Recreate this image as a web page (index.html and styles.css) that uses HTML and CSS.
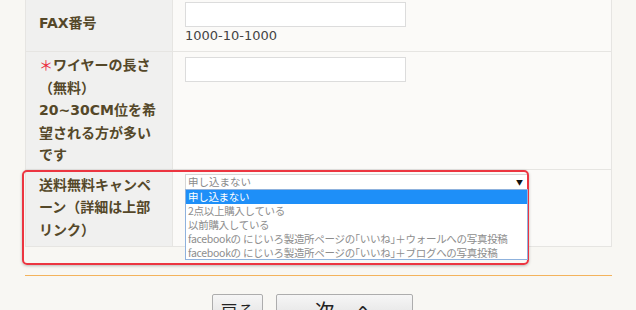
FILE: index.html
```html
<!DOCTYPE html>
<html lang="ja">
<head>
<meta charset="utf-8">
<link rel="stylesheet" href="styles.css">
</head>
<body>
<div class="page">
  <table class="form">
    <tr class="row-fax">
      <th>FAX番号</th>
      <td>
        <input class="text-input" type="text">
        <div class="example">1000-10-1000</div>
      </td>
    </tr>
    <tr class="row-wire">
      <th><span class="req">＊</span>ワイヤーの長さ（無料）<br>20~30CM位を希望される方が多いです</th>
      <td><input class="text-input" type="text"></td>
    </tr>
    <tr class="row-camp">
      <th>送料無料キャンペーン（詳細は上部リンク）</th>
      <td>
        <div class="select-wrap">
          <div class="select-box"><span>申し込まない</span><span class="arrow">▼</span></div>
          <ul class="options">
            <li class="selected">申し込まない</li>
            <li>2点以上購入している</li>
            <li>以前購入している</li>
            <li>facebookの にじいろ製造所ページの｢いいね｣＋ウォールへの写真投稿</li>
            <li>facebookの にじいろ製造所ページの｢いいね｣＋ブログへの写真投稿</li>
          </ul>
        </div>
      </td>
    </tr>
  </table>
  <div class="highlight"></div>
  <div class="rule"></div>
  <div class="buttons">
    <button class="btn back">戻る</button>
    <button class="btn next">次　へ</button>
  </div>
</div>
</body>
</html>
```
FILE: styles.css
```css
html, body {
  margin: 0;
  padding: 0;
}
body {
  background: #f8f7f3;
  font-family: "Noto Sans CJK JP", "Noto Sans", sans-serif;
  overflow: hidden;
  height: 310px;
}
.page {
  position: relative;
  width: 587px;
  margin: -5px 0 0 25px;
}
.form {
  border-collapse: collapse;
  width: 587px;
}
.form th, .form td {
  border: 1px solid #e6e5e2;
}
.form th {
  width: 120px;
  padding: 2px 13px;
  background: #f0f0ef;
  color: #554829;
  font-family: "DejaVu Sans", "Noto Sans CJK JP", sans-serif;
  font-size: 14px;
  font-weight: bold;
  line-height: 22.5px;
  text-align: left;
  vertical-align: middle;
}
.row-camp th {
  padding: 4px 13px 5px;
}
.req {
  color: #ea2b3c;
  font-weight: normal;
}
.form td {
  background: #fbfaf8;
  padding: 5px 12px 5px;
  vertical-align: top;
}
.row-fax td {
  padding-top: 6px;
}
.row-camp td {
  padding-top: 4px;
}
.text-input {
  display: block;
  box-sizing: border-box;
  width: 221px;
  height: 25px;
  margin: 0;
  border: 1px solid #dcdcdc;
  background: #fff;
}
.example {
  font-family: "DejaVu Sans", sans-serif;
  font-size: 13px;
  color: #444;
  line-height: 20px;
  margin-top: -1px;
}
.select-wrap {
  position: relative;
  width: 343px;
}
.select-box {
  box-sizing: border-box;
  height: 15px;
  border: 1px solid #d6d6d6;
  border-bottom: none;
  background: #fff;
  display: flex;
  justify-content: space-between;
  align-items: center;
  padding: 0 4px 0 2px;
  font-size: 10.5px;
  color: #8a8a8a;
  line-height: 14px;
}
.arrow {
  font-size: 7px;
  color: #111;
}
.options {
  position: absolute;
  z-index: 2;
  left: 0;
  top: 15px;
  width: 343px;
  box-sizing: border-box;
  margin: 0;
  padding: 0 0 1px;
  list-style: none;
  background: #fff;
  border: 1px solid #8fb2dd;
  height: 71px;
  overflow: hidden;
}
.options li {
  height: 14px;
  line-height: 14px;
  font-size: 10.5px;
  color: #8d8d8d;
  padding-left: 2px;
  white-space: nowrap;
  letter-spacing: -0.3px;
}
.options li.selected {
  background: #1e8ff8;
  color: #fff;
}
.highlight {
  position: absolute;
  z-index: 1;
  left: -3px;
  top: 175px;
  width: 507px;
  height: 95px;
  box-sizing: border-box;
  border: 2px solid #ec3540;
  border-radius: 5px;
  box-shadow: 0 1px 3px rgba(0,0,0,0.25);
}
.rule {
  margin-top: 28px;
  height: 1px;
  background: #f3b35c;
}
.buttons {
  display: flex;
  gap: 13px;
  padding-left: 187px;
  margin-top: 18px;
}
.btn {
  box-sizing: border-box;
  height: 32px;
  border: 1px solid #adadad;
  border-radius: 2px;
  background: linear-gradient(#f6f6f6, #dedede);
  font-family: "Noto Sans CJK JP", sans-serif;
  color: #222;
  padding: 0;
}
.back {
  width: 51px;
  font-size: 17px;
}
.next {
  width: 137px;
  font-size: 20px;
}
```
